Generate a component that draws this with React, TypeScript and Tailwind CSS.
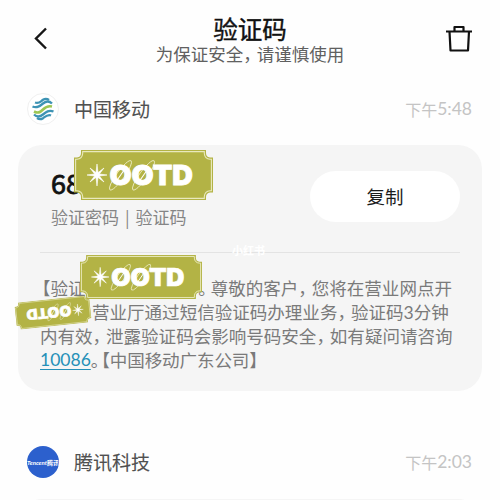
import clsx from "clsx";
import type { ReactNode } from "react";

function Comma() {
  return <span className="tracking-[-4.1px]">，</span>;
}

function Sticker({ className }: { className: string }) {
  return (
    <svg viewBox="0 0 139 50" className={clsx("absolute", className)}>
      <path
        d="M7 0H132V3Q132 7 136 7.500H139V42.500H136Q132 43 132 47V50H7V47Q7 43 3 42.500H0V7.500H3Q7 7 7 3Z"
        fill="#b3b345"
      />
      <path
        d="M8.700 1.600H130.300V3.500Q130.800 8.800 136 9.200H137.400V40.800H136Q130.800 41.200 130.300 46.500V48.400H8.700V46.500Q8.200 41.200 3 40.800H1.600V9.200H3Q8.200 8.800 8.700 3.500Z"
        fill="none"
        stroke="#e9e9bd"
        strokeWidth="1.1"
      />
      <path
        d="M23 14L24 22.6L30 18L25.4 24L33 25L25.4 26L30 32L24 27.4L23 36L22 27.4L16 32L20.6 26L13 25L20.6 24L16 18L22 22.6Z"
        fill="#fff"
        stroke="#fff"
        strokeWidth="0.6"
      />
      <g fill="none" stroke="#e9e9bd" strokeWidth="0.9">
        <ellipse cx="46.500" cy="25.300" rx="18" ry="4" transform="rotate(-54 46.500 25.300)" />
        <ellipse cx="69.500" cy="25.300" rx="18" ry="4" transform="rotate(-54 69.500 25.300)" />
      </g>
      <text
        x="35.5"
        y="35"
        textLength="83.5"
        lengthAdjust="spacingAndGlyphs"
        fill="#fff"
        stroke="#fff"
        strokeWidth="0.8"
        fontFamily="Inter, sans-serif"
        fontWeight="900"
        fontSize="27"
      >
        OOTD
      </text>
      <path
        d="M42.500 31L50.500 19.500M65.500 31L73.500 19.500"
        stroke="#fff"
        strokeWidth="1.1"
      />
    </svg>
  );
}

function MobileLogo() {
  return (
    <span className="flex h-8 w-8 items-center justify-center rounded-full border border-[#f0f0f0] bg-white">
      <svg viewBox="0 0 24 24" className="h-6 w-6" fill="none" strokeWidth="2.3">
        <g stroke="#3d93b4">
          <path d="M4 5.500C8 7 9 5 12 2.800Q15 .8 18 3" />
          <path d="M1.500 9.500C6 11.500 9 9 12 6.500C15 4 18 3.500 21 6.500" />
          <path d="M3 17.500C6 20.500 9 20 12 17.500C15 15 18 12.500 22.500 14.500" />
          <path d="M6 21Q9 23.200 12 21.200C15 19 17 17 20 18.500" />
        </g>
        <path d="M3 14.500C7 16.500 9 15.500 12 12.500C14.500 10 17 8.500 21 9.500" stroke="#9cc653" strokeWidth="2.6" />
      </svg>
    </span>
  );
}

function SenderRow({
  logo,
  name,
  time,
}: {
  logo: ReactNode;
  name: string;
  time: string;
}) {
  return (
    <div className="flex h-8 items-center pr-7 pl-[27px]">
      {logo}
      <span className="ml-[15px] text-[19px] text-[#505050] [-webkit-text-stroke:0.1px_#505050]">
        {name}
      </span>
      <span className="ml-auto flex items-center text-[16px] text-[#c4c4c4]">
        下午
        <span className="font-[Lato] text-[17.5px]">{time}</span>
      </span>
    </div>
  );
}

export default function App() {
  return (
    <div className="h-[500px] w-[500px] overflow-hidden bg-[#fefefe] font-['Noto_Sans_CJK_SC',sans-serif] whitespace-nowrap">
      <header className="flex h-[93px] items-start justify-between pr-[27px] pl-[33px]">
        <svg viewBox="0 0 16 24" className="mt-[27px] h-6 w-4" fill="none" stroke="#161616" strokeWidth="2.4">
          <path d="M13 1.500L3 11.500L13 21.500" />
        </svg>
        <div className="ml-[6px] flex flex-col items-center pt-[14px]">
          <h1 className="text-[24.5px] leading-[30px] text-[#111] [-webkit-text-stroke:0.4px_#111]">
            验证码
          </h1>
          <p className="text-[17.5px] leading-5 text-[#606060]">
            为保证安全
            <Comma />
            请谨慎使用
          </p>
        </div>
        <svg viewBox="0 0 28 28" className="mt-[25px] h-7 w-7" fill="none" stroke="#111" strokeWidth="2.2" strokeLinejoin="round">
          <path d="M1 6.500H27M4.500 6.500L5.500 25.500H23L24 6.500M9.500 6V2H18.500V6" />
        </svg>
      </header>

      <SenderRow logo={<MobileLogo />} name="中国移动" time="5:48" />

      <section className="relative mt-5 ml-[18px] h-[246px] w-[464px] rounded-[24px] bg-[#f5f5f5] px-[22px] pt-[26px]">
        <div className="flex h-[81px] justify-between pl-[11px]">
          <div>
            <p className="-mt-[2px] text-[27px] leading-[28px] text-[#111] [-webkit-text-stroke:0.8px_#111]">
              68
            </p>
            <p className="mt-[8px] text-[17px] leading-6 text-[#858585]">
              验证密码<span className="mx-[6px]">|</span>验证码
            </p>
          </div>
          <button className="h-[51px] w-[150px] rounded-full bg-white text-[18.5px] text-[#1c1c1c]">
            复制
          </button>
        </div>
        <div className="h-px bg-[#e3e3e3]" />
        <span className="absolute top-[97px] left-[214px] text-[11px] leading-4 font-bold text-white">
          小红书
        </span>

        <div className="mt-[23px] text-[17.55px] leading-[23.5px] text-[#7a7a7a]">
          <p className="flex justify-between pr-2">
            <span className="-ml-[7px]">【验证</span>
            <span>
              <span className="-mr-[5px] pl-[5px]">。</span>
              尊敬的客户
              <Comma />
              您将在营业网点开
            </span>
          </p>
          <p className="pl-[52px]">
            营业厅通过短信验证码办理业务
            <Comma />
            验证码<span className="font-[Lato]">3</span>分钟
          </p>
          <p>
            内有效
            <Comma />
            泄露验证码会影响号码安全
            <Comma />
            如有疑问请咨询
          </p>
          <p className="flex">
            <span className="font-[Lato] text-[#2590b8] underline decoration-1 underline-offset-[3px]">
              10086
            </span>
            <span className="tracking-[-8px]">。</span>
            <span className="-ml-2 tracking-[-0.1px]">【中国移动广东公司】</span>
          </p>
        </div>

        <Sticker className="top-[5px] left-14 h-[50px] w-[139px]" />
        <Sticker className="top-[110px] left-[62px] h-11 w-[122px]" />
        <Sticker className="top-[154px] left-[-3px] h-[27px] w-[76px] rotate-[174deg]" />
      </section>

      <div className="mt-[55px]">
        <SenderRow
          logo={
            <span className="flex h-8 w-8 items-center justify-center overflow-hidden rounded-full bg-[#2c60cd] text-[6px] font-bold text-white">
              <span className="font-[Lato] italic">Tencent</span>腾讯
            </span>
          }
          name="腾讯科技"
          time="2:03"
        />
      </div>
      <div className="mx-[18px] mt-[21px] h-[100px] rounded-[24px] bg-[#f5f5f5]" />
    </div>
  );
}
